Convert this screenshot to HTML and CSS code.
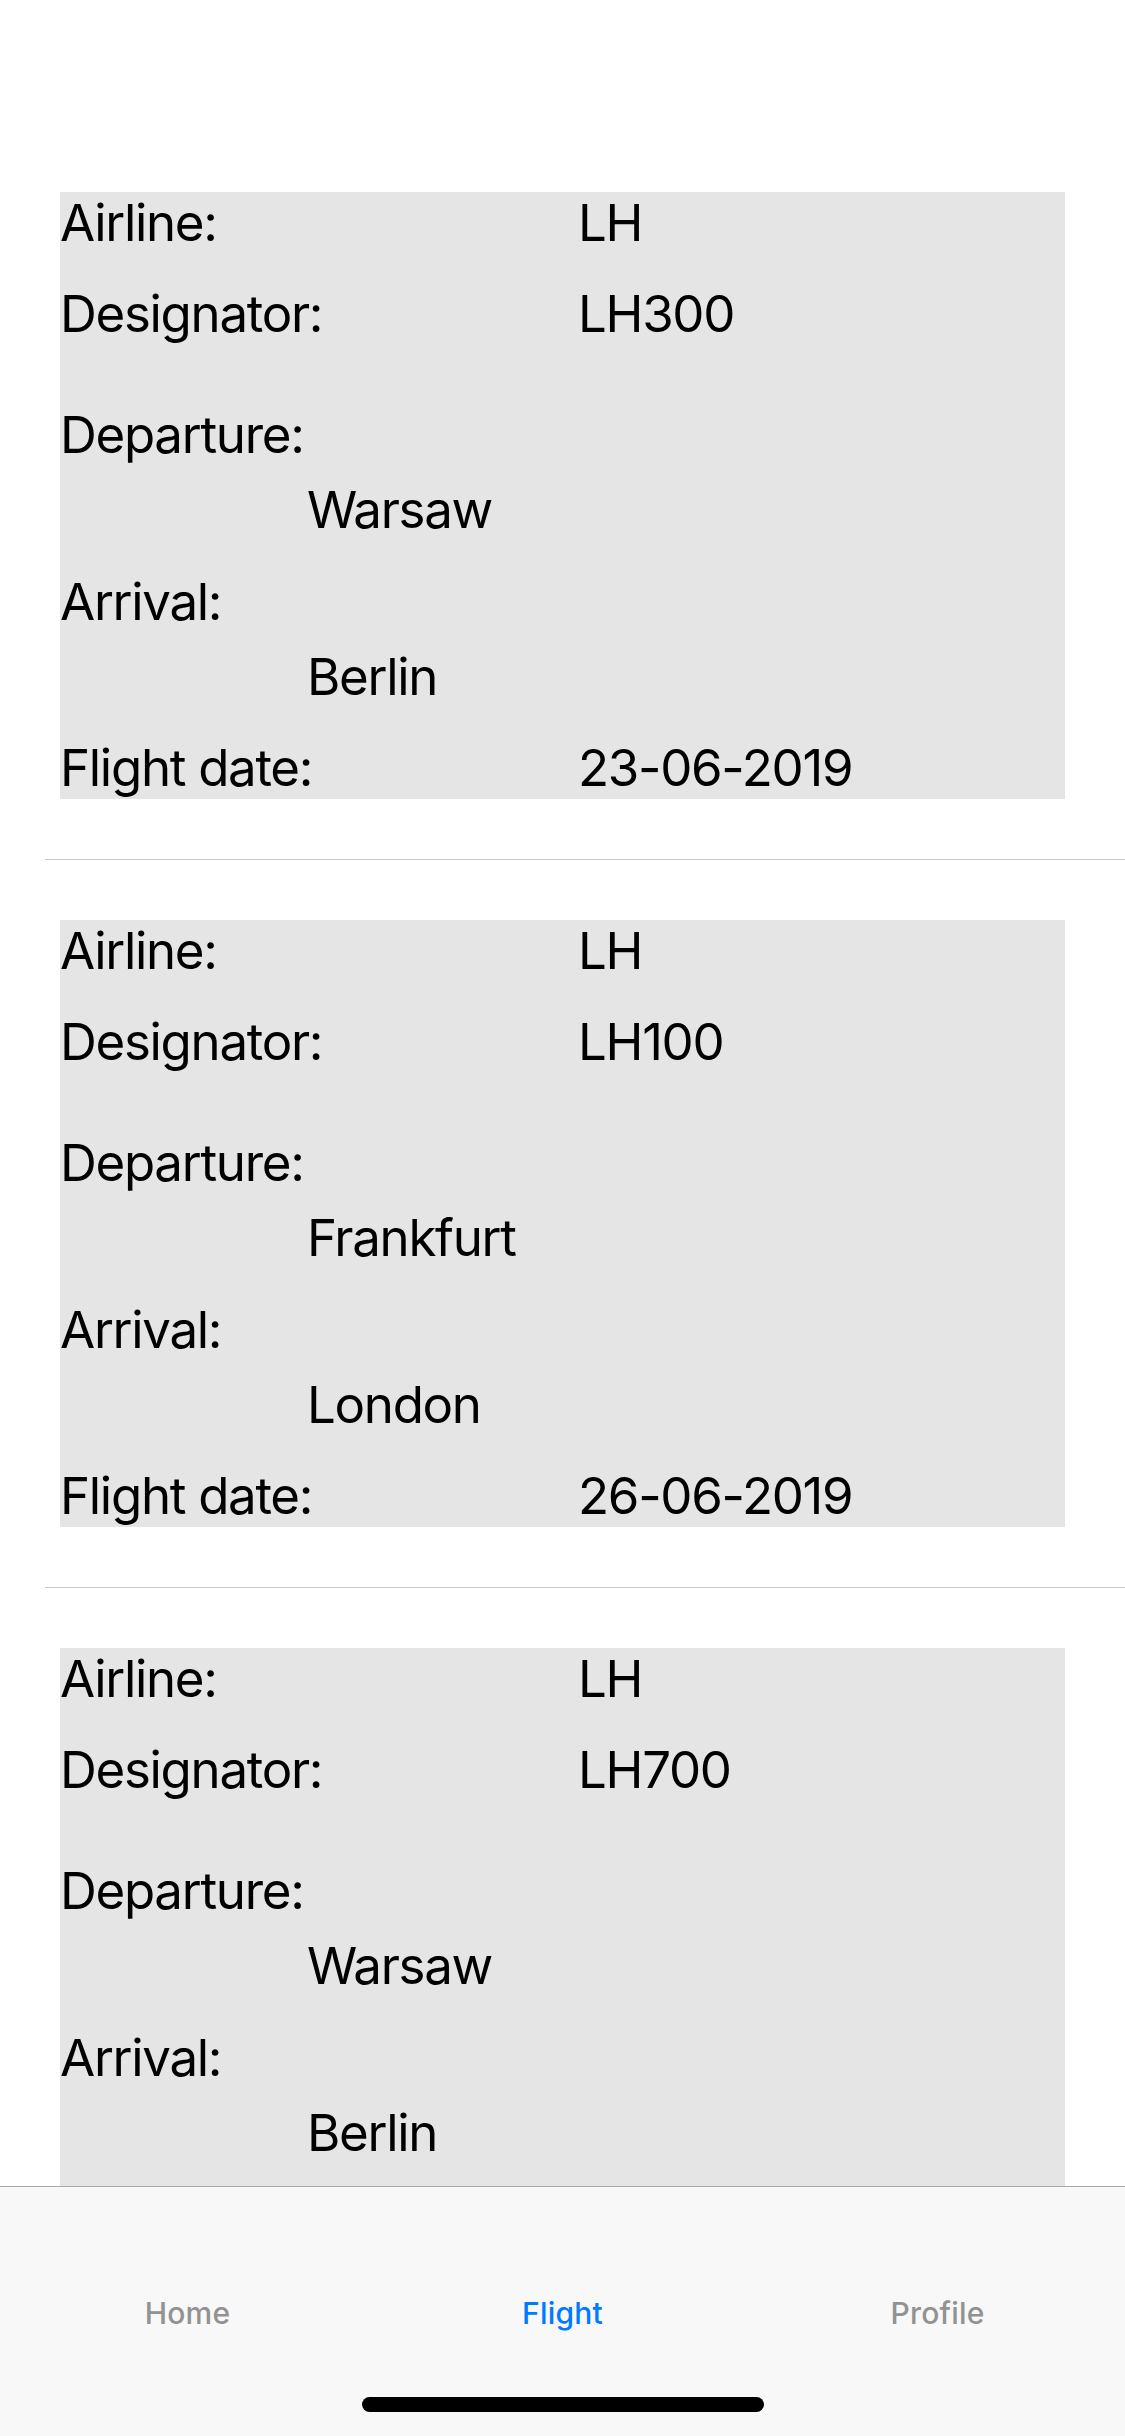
FILE: index.html
```html
<!DOCTYPE html>
<html lang="en">
<head>
<meta charset="utf-8">
<title>Flights</title>
<link rel="stylesheet" href="styles.css">
</head>
<body>
<div class="screen">
  <div class="status-bar"></div>
  <div class="list">
    <div class="cell">
      <div class="card">
        <div class="row gap-s"><span class="label">Airline:</span><span class="value">LH</span></div>
        <div class="row gap-l"><span class="label">Designator:</span><span class="value">LH300</span></div>
        <div class="row gap-xs"><span class="label">Departure:</span></div>
        <div class="city gap-m">Warsaw</div>
        <div class="row gap-xs"><span class="label">Arrival:</span></div>
        <div class="city gap-s">Berlin</div>
        <div class="row"><span class="label">Flight date:</span><span class="value">23-06-2019</span></div>
      </div>
    </div>
    <div class="cell">
      <div class="card">
        <div class="row gap-s"><span class="label">Airline:</span><span class="value">LH</span></div>
        <div class="row gap-l"><span class="label">Designator:</span><span class="value">LH100</span></div>
        <div class="row gap-xs"><span class="label">Departure:</span></div>
        <div class="city gap-m">Frankfurt</div>
        <div class="row gap-xs"><span class="label">Arrival:</span></div>
        <div class="city gap-s">London</div>
        <div class="row"><span class="label">Flight date:</span><span class="value">26-06-2019</span></div>
      </div>
    </div>
    <div class="cell">
      <div class="card">
        <div class="row gap-s"><span class="label">Airline:</span><span class="value">LH</span></div>
        <div class="row gap-l"><span class="label">Designator:</span><span class="value">LH700</span></div>
        <div class="row gap-xs"><span class="label">Departure:</span></div>
        <div class="city gap-m">Warsaw</div>
        <div class="row gap-xs"><span class="label">Arrival:</span></div>
        <div class="city gap-s">Berlin</div>
      </div>
    </div>
  </div>
  <div class="tab-bar">
    <div class="tabs">
      <div class="tab">Home</div>
      <div class="tab active">Flight</div>
      <div class="tab">Profile</div>
    </div>
    <div class="home-indicator"></div>
  </div>
</div>
</body>
</html>
```
FILE: styles.css
```css
* { box-sizing: border-box; }
html, body { margin: 0; padding: 0; background: #ffffff; }
body { font-family: Inter, "Noto Sans", "Liberation Sans", sans-serif; color: #000; }

.screen {
  width: 1125px;
  height: 2436px;
  display: flex;
  flex-direction: column;
  overflow: hidden;
}
.status-bar { height: 132px; flex: none; }
.list { flex: 1; overflow: hidden; min-height: 0; }

.cell {
  margin-left: 45px;
  padding: 60px 60px 60px 15px;
  border-bottom: 1px solid #c8c7cc;
}
.card {
  background: #e5e5e5;
  width: 1005px;
  height: 607px;
  font-size: 51px;
  line-height: 61px;
  letter-spacing: -1.3px;
}
.row { display: flex; height: 61px; }
.label { width: 518px; flex: none; white-space: nowrap; }
.value { white-space: nowrap; }
.city { height: 61px; padding-left: 247px; white-space: nowrap; }
.gap-xs { margin-bottom: 14px; }
.gap-s { margin-bottom: 30px; }
.gap-m { margin-bottom: 31px; }
.gap-l { margin-bottom: 60px; }

.tab-bar {
  height: 250px;
  flex: none;
  background: #f8f8f8;
  border-top: 1px solid #a9a9ad;
  display: flex;
  flex-direction: column;
  align-items: center;
}
.tabs {
  display: flex;
  width: 100%;
  padding-top: 108px;
}
.tab {
  flex: 1;
  text-align: center;
  font-size: 30px;
  line-height: 36px;
  font-weight: 500;
  color: #929292;
  letter-spacing: 0.2px;
}
.tab.active { color: #007aff; }
.home-indicator {
  margin-top: 66px;
  width: 402px;
  height: 15px;
  border-radius: 8px;
  background: #000;
}
```
